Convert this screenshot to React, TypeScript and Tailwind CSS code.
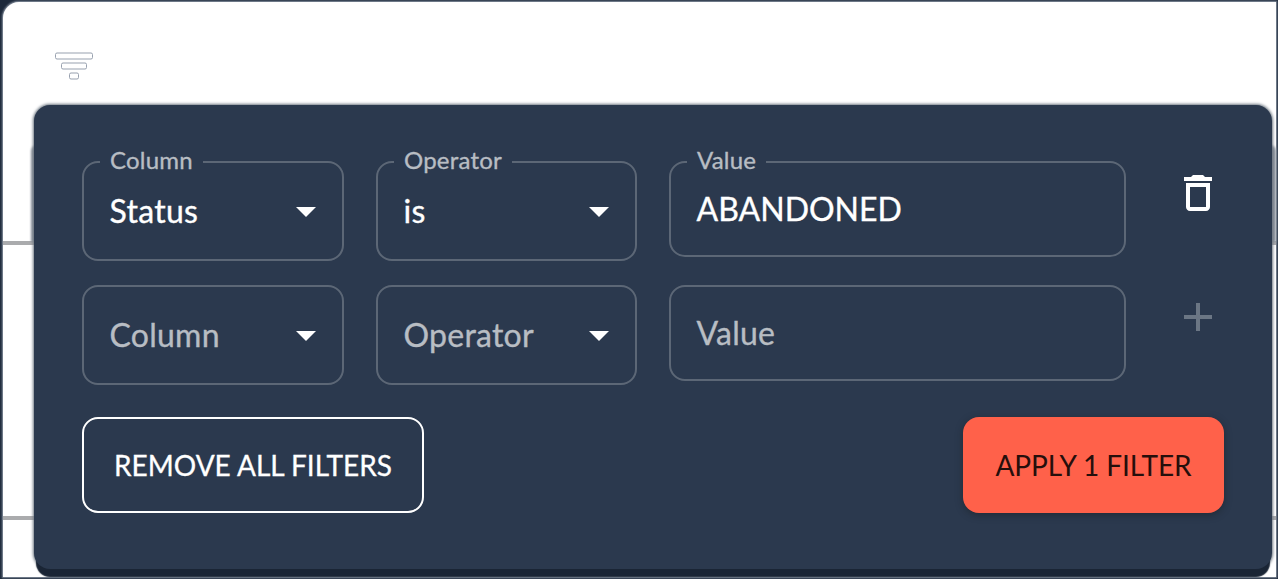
import React from "react";

function Caret() {
  return (
    <svg viewBox="0 0 20 10" className="mt-[2px] h-[10px] w-5 shrink-0 fill-white">
      <path d="M0 0h20L10 10z" />
    </svg>
  );
}

type FieldProps = {
  label: string;
  value?: string;
  select?: boolean;
  className: string;
};

function Field({ label, value, select, className }: FieldProps) {
  const height = value
    ? select ? "h-[110px]" : "h-[106px]"
    : select ? "h-[100px]" : "h-[96px]";
  const inner = value
    ? select ? "h-[76px]" : "h-[72px]"
    : select ? "h-[96px]" : "h-[92px]";
  const tone = value
    ? select ? "text-white tracking-[0.3px]" : "text-white"
    : "text-[#b8bdc3] tracking-[0.25px]";
  return (
    <fieldset className={`${className} ${height} min-w-0 rounded-[16px] border-2 border-[#5c6776] px-4 text-[32px] leading-[40px] [-webkit-text-stroke:0.35px]`}>
      {value && (
        <legend className="h-[22px] px-[10px] text-[24px] leading-[18px] tracking-[0.2px] text-[#b8bdc3]">{label}</legend>
      )}
      <div className={`flex items-center justify-between pl-[9.5px] pr-[10px] ${inner}`}>
        <span className={`-mt-px ${tone}`}>{value ?? label}</span>
        {select && <Caret />}
      </div>
    </fieldset>
  );
}

function TableBackdrop() {
  return (
    <div className="ml-[3px] mr-[2px] flex h-[575px] flex-col overflow-hidden rounded-tl-[16px] bg-white shadow-[0_0_2px_1px_#8b95a3]">
      <div className="h-[239px] shrink-0 pl-[51px] pt-[50px]">
        <svg width="40" height="28" viewBox="0 0 40 28" fill="none" stroke="#98a1af" strokeWidth="1">
          <rect x="1.5" y="1" width="37" height="6" rx="1.5" />
          <rect x="7.5" y="11" width="25" height="6" rx="1.5" />
          <rect x="15.5" y="21" width="9" height="6" rx="1.5" />
        </svg>
      </div>
      <div className="h-[275px] shrink-0 border-t-4 border-[#aaabad]" />
      <div className="flex-1 border-t-4 border-[#aaabad]" />
    </div>
  );
}

export default function App() {
  return (
    <main className="relative h-[579px] w-full overflow-hidden bg-[#1d293b] pt-[2px] font-['Lato',sans-serif]">
      <TableBackdrop />
      <div className="absolute left-[31px] top-[145px] h-[97px] w-[1245px] rounded-t-md bg-[#8e959e] blur-[1px]" />
      <section className="absolute left-[34px] top-[105px] h-[464px] w-[1238px] rounded-[16px] bg-[#2b394e] pl-[48px] pr-[48px] pt-[46px] shadow-[0_10px_1px_-2px_#1a2535,0_0_3px_1px_#6c7681]">
        <div className="flex h-[134px] items-start">
          <Field label="Column" value="Status" select className="w-[262px]" />
          <Field label="Operator" value="is" select className="ml-8 w-[261px]" />
          <Field label="Value" value="ABANDONED" className="ml-8 w-[457px]" />
          <button aria-label="Delete filter" className="ml-auto mt-[18px] flex h-12 w-[52px] items-center justify-center">
            <svg viewBox="0 0 24 24" className="h-12 w-12 fill-white">
              <path d="M6 19c0 1.1.9 2 2 2h8c1.1 0 2-.9 2-2V7H6v12zM8 9h8v10H8V9zm7.5-5-1-1h-5l-1 1H5v2h14V4h-3.5z" />
            </svg>
          </button>
        </div>
        <div className="flex h-[132px] items-start">
          <Field label="Column" select className="w-[262px]" />
          <Field label="Operator" select className="ml-8 w-[261px]" />
          <Field label="Value" className="ml-8 w-[457px]" />
          <button aria-label="Add filter" className="ml-auto mt-2 flex h-12 w-[52px] items-center justify-center">
            <svg viewBox="0 0 24 24" className="h-12 w-12 fill-[#6b7684]">
              <path d="M19 13h-6v6h-2v-6H5v-2h6V5h2v6h6v2z" />
            </svg>
          </button>
        </div>
        <div className="flex justify-between">
          <button className="h-24 w-[342px] whitespace-nowrap rounded-[16px] border-2 border-white text-[28px] text-white [-webkit-text-stroke:0.3px]">
            REMOVE ALL FILTERS
          </button>
          <button className="h-24 w-[261px] whitespace-nowrap rounded-[16px] bg-[#ff614a] text-[28px] tracking-[-0.05px] text-[#260f0c] shadow-[0_2px_7px_0_rgba(25,30,32,0.5)]">
            APPLY 1 FILTER
          </button>
        </div>
      </section>
    </main>
  );
}
